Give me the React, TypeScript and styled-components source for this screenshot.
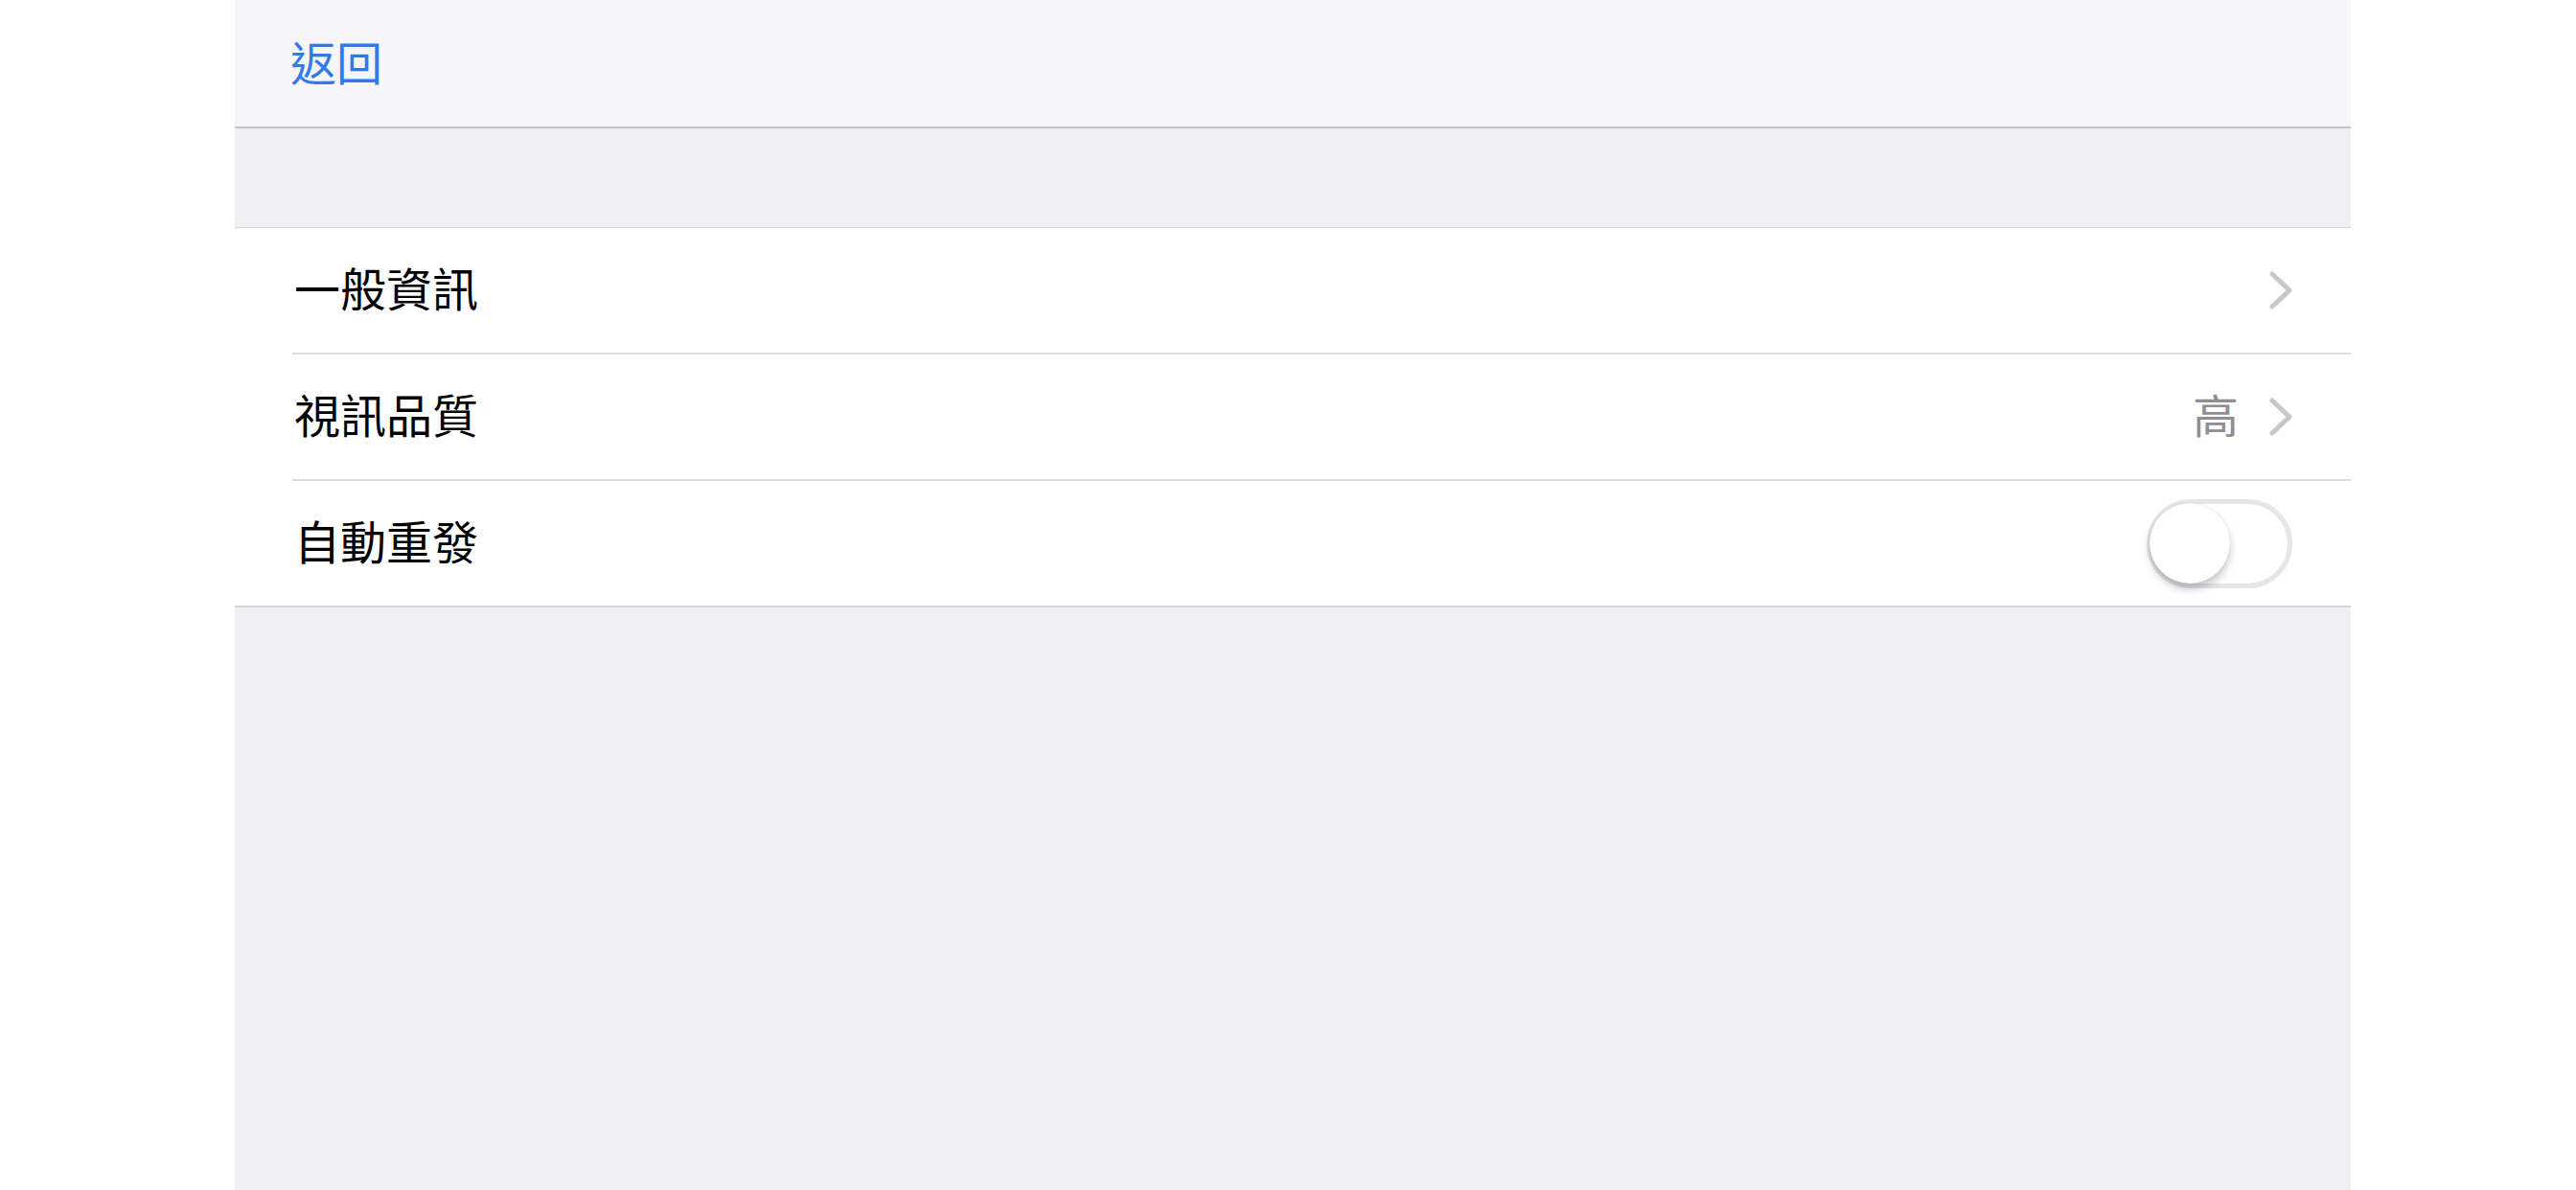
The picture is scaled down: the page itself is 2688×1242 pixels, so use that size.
import React, { useState } from "react";
import styled, { createGlobalStyle } from "styled-components";

const GlobalStyle = createGlobalStyle`
  html, body {
    margin: 0;
    padding: 0;
    background: #ffffff;
    font-family: "Noto Sans CJK TC", "Noto Sans", sans-serif;
  }
`;

const Page = styled.div`
  margin-left: 245px;
  width: 2208px;
  height: 1242px;
  background: #efeff4;
  display: flex;
  flex-direction: column;
  overflow: hidden;
`;

const NavBar = styled.header`
  height: 132px;
  background: #f6f6f8;
  border-bottom: 2px solid #c4c4c8;
  display: flex;
  align-items: center;
  padding-left: 58px;
  box-sizing: content-box;
`;

const BackButton = styled.button`
  border: none;
  background: none;
  padding: 0 0 6px;
  font-family: inherit;
  font-size: 48px;
  line-height: 1;
  color: #3479e8;
  cursor: pointer;
`;

const SectionGap = styled.div`
  height: 103px;
`;

const Group = styled.section`
  background: #ffffff;
  border-top: 1px solid #d4d4d8;
  border-bottom: 2px solid #d4d4d8;
  padding-left: 60px;
`;

const Row = styled.div<{ $last?: boolean }>`
  display: flex;
  align-items: center;
  padding-right: 61px;
  border-bottom: ${(p) => (p.$last ? "none" : "2px solid #dedee2")};
  box-sizing: border-box;
  height: ${(p) => (p.$last ? "130px" : "132px")};
`;

const Label = styled.span`
  flex: 1;
  font-size: 48px;
  line-height: 1;
  color: #000000;
  padding: 0 0 8px 2px;
`;

const Detail = styled.span`
  font-size: 48px;
  line-height: 1;
  color: #8e8e93;
  margin-right: 32px;
  padding-bottom: 8px;
`;

const Chevron = () => (
  <svg width="24" height="40" viewBox="0 0 24 40">
    <path
      d="M3 3 L21 20 L3 37"
      fill="none"
      stroke="#c7c7cc"
      strokeWidth="5"
      strokeLinecap="round"
      strokeLinejoin="round"
    />
  </svg>
);

const Track = styled.button<{ $on: boolean }>`
  width: 152px;
  height: 93px;
  border-radius: 47px;
  border: 5px solid ${(p) => (p.$on ? "#4cd964" : "#e5e5ea")};
  background: ${(p) => (p.$on ? "#4cd964" : "#ffffff")};
  padding: 0;
  display: flex;
  align-items: center;
  justify-content: ${(p) => (p.$on ? "flex-end" : "flex-start")};
  box-sizing: border-box;
  cursor: pointer;
`;

const Knob = styled.span`
  width: 84px;
  height: 84px;
  border-radius: 50%;
  background: #ffffff;
  margin-left: -2px;
  box-shadow: 0 6px 8px rgba(0, 0, 0, 0.22), 0 0 1px rgba(0, 0, 0, 0.2);
`;

export default function App() {
  const [resend, setResend] = useState(false);
  return (
    <>
      <GlobalStyle />
      <Page>
        <NavBar>
          <BackButton>返回</BackButton>
        </NavBar>
        <SectionGap />
        <Group>
          <Row>
            <Label>一般資訊</Label>
            <Chevron />
          </Row>
          <Row>
            <Label>視訊品質</Label>
            <Detail>高</Detail>
            <Chevron />
          </Row>
          <Row $last>
            <Label>自動重發</Label>
            <Track $on={resend} onClick={() => setResend(!resend)}>
              <Knob />
            </Track>
          </Row>
        </Group>
      </Page>
    </>
  );
}
